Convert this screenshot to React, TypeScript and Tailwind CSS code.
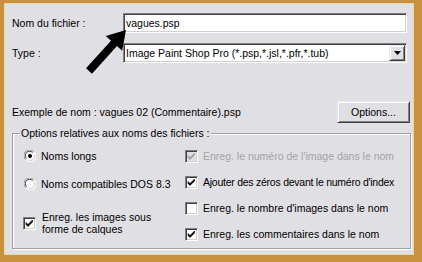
import React from "react";

const sunken =
  "border border-t-[#808080] border-l-[#808080] border-b-white border-r-white shadow-[inset_1px_1px_0_#404040,inset_-1px_-1px_0_#d4d0c8]";
const raised =
  "border border-t-[#e8e8ec] border-l-[#e8e8ec] border-b-[#404040] border-r-[#404040] shadow-[inset_1px_1px_0_#ffffff,inset_-1px_-1px_0_#808080]";

function Check({ checked, disabled }: { checked: boolean; disabled?: boolean }) {
  return (
    <div
      className={`w-[13px] h-[13px] shrink-0 flex items-center justify-center ${sunken} ${
        disabled ? "bg-[#e0dfe3]" : "bg-white"
      }`}
    >
      {checked && (
        <svg width="9" height="9" viewBox="0 0 9 9">
          <path
            d="M1 3.5 L3 5.5 L7.5 1 L7.5 3 L3 7.5 L1 5.5 Z"
            fill={disabled ? "#a0a0a0" : "#000"}
            stroke={disabled ? "#a0a0a0" : "#000"}
            strokeWidth="0.6"
          />
        </svg>
      )}
    </div>
  );
}

function Radio({ checked }: { checked: boolean }) {
  return (
    <svg width="12" height="12" viewBox="0 0 12 12" className="shrink-0">
      <circle cx="6" cy="6" r="5.5" fill="#ffffff" />
      <path d="M1.5 9.5 A5.5 5.5 0 0 1 9.5 1.5" stroke="#808080" strokeWidth="1" fill="none" />
      <path d="M2.6 8.6 A4.2 4.2 0 0 1 8.6 2.6" stroke="#404040" strokeWidth="1" fill="none" />
      <path d="M10.5 2.5 A5.5 5.5 0 0 1 2.5 10.5" stroke="#ffffff" strokeWidth="1" fill="none" />
      <path d="M9.4 3.4 A4.2 4.2 0 0 1 3.4 9.4" stroke="#d4d0c8" strokeWidth="1" fill="none" />
      {checked && <circle cx="6" cy="6" r="2" fill="#000" />}
    </svg>
  );
}

export default function App() {
  return (
    <div className="w-[422px] h-[262px] bg-[#c8913f] pt-[3px] pl-[4px] pr-[8px] pb-[7px] font-['Liberation_Sans',Arial,sans-serif] text-[10.5px] text-black leading-none">
      <div className="relative h-full border border-[#ecd6a8] bg-[#e0dfe3] pt-[9px] pl-[7px] pr-[2px] flex flex-col">
        {/* Row 1 */}
        <div className="flex items-center">
          <div className="w-[111px]">Nom du fichier :</div>
          <div className={`w-[284px] h-[20px] bg-white ${sunken} flex items-center pl-[2px]`}>
            vagues.psp
          </div>
        </div>
        {/* Row 2 */}
        <div className="flex items-center mt-[10px]">
          <div className="w-[111px]">Type :</div>
          <div className={`w-[284px] h-[20px] bg-white ${sunken} flex items-center pl-[2px] pr-[1px] py-[1px]`}>
            <div className="flex-1">Image Paint Shop Pro (*.psp,*.jsl,*.pfr,*.tub)</div>
            <div className={`w-[16px] h-[16px] bg-[#e0dfe3] ${raised} flex items-center justify-center`}>
              <svg width="7" height="4" viewBox="0 0 7 4">
                <path d="M0 0 H7 L3.5 4 Z" fill="#000" />
              </svg>
            </div>
          </div>
        </div>
        {/* Row 3 */}
        <div className="flex items-center justify-between mt-[38px]">
          <div>Exemple de nom : vagues 02 (Commentaire).psp</div>
          <div className={`w-[73px] h-[22px] mr-[1px] bg-[#e0dfe3] ${raised} flex items-center justify-center`}>
            Options...
          </div>
        </div>
        {/* Group */}
        <div className="relative mt-[10px] h-[116px] border border-[#a0a0a0] shadow-[inset_1px_1px_0_#ffffff,1px_1px_0_#ffffff] pl-[11px] pt-[15px]">
          <div className="absolute left-[7px] top-[-6px] bg-[#e0dfe3] px-[1px]">
            Options relatives aux noms des fichiers :
          </div>
          <div className="grid grid-cols-[161px_1fr]">
            <div className="flex flex-col">
              <div className="flex items-center h-[14px] gap-[5px]">
                <Radio checked />
                <span>Noms longs</span>
              </div>
              <div className="flex items-center h-[14px] gap-[5px] mt-[14px]">
                <Radio checked={false} />
                <span>Noms compatibles DOS 8.3</span>
              </div>
              <div className="flex items-center gap-[6px] mt-[20px] -ml-[1px]">
                <Check checked />
                <span className="leading-[12px]">
                  Enreg. les images sous
                  <br />
                  forme de calques
                </span>
              </div>
            </div>
            <div className="flex flex-col gap-[12px]">
              <div className="flex items-center h-[14px] gap-[5px]">
                <Check checked disabled />
                <span className="text-[#a3a3a6]">Enreg. le numéro de l'image dans le nom</span>
              </div>
              <div className="flex items-center h-[14px] gap-[5px]">
                <Check checked />
                <span className="tracking-[-0.25px]">Ajouter des zéros devant le numéro d'index</span>
              </div>
              <div className="flex items-center h-[14px] gap-[5px]">
                <Check checked={false} />
                <span>Enreg. le nombre d'images dans le nom</span>
              </div>
              <div className="flex items-center h-[14px] gap-[5px]">
                <Check checked />
                <span>Enreg. les commentaires dans le nom</span>
              </div>
            </div>
          </div>
        </div>
        {/* Arrow overlay */}
        <svg
          className="absolute left-[-5px] top-[-4px] pointer-events-none"
          width="140"
          height="90"
          viewBox="0 0 140 90"
        >
          <polygon
            points="126,30 122.2,50.8 117,46.1 92,73.7 86,68.3 111,40.7 105.8,36"
            fill="#000"
          />
        </svg>
      </div>
    </div>
  );
}
